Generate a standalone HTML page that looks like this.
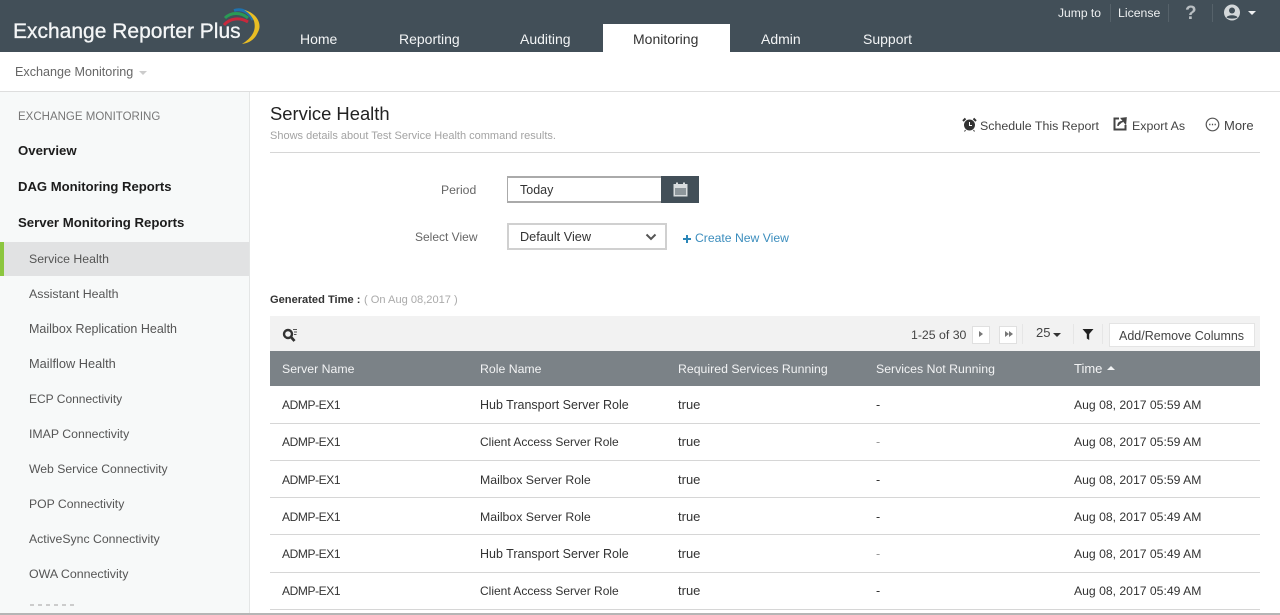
<!DOCTYPE html>
<html><head><meta charset="utf-8"><title>Service Health</title>
<style>
html,body{margin:0;padding:0;width:1280px;height:615px;overflow:hidden;background:#fff;font-family:"Liberation Sans",sans-serif}
.t{position:absolute;white-space:nowrap;line-height:20px;height:20px;font-size:12.5px;color:#333}
.b{position:absolute}
.nav{font-size:14px;color:#f2f4f5}
.side{color:#555;left:29px}
.bold{font-size:13.2px;font-weight:bold;color:#1c1c1c;left:18px}
.th{font-size:12.3px;color:#f2f3f4}
.c1{left:282px;font-size:12px;letter-spacing:-.4px}
.c2{left:480px}
.c3{left:678px;font-size:13px}
.c4{left:876px}
.c5{left:1074px;font-size:12.200px}
.hr{position:absolute;left:270px;width:990px;height:1px;background:#d6d6d6}
</style></head><body>
<div class="b" style="left:0;top:0;width:1280px;height:52px;background:#424f58"></div>
<div class="t" style="left:13px;top:20px;height:24px;line-height:24px;font-size:21px;color:#f4f6f7;-webkit-text-stroke:.3px #f4f6f7">Exchange Reporter Plus</div>
<svg class="b" style="left:220px;top:7px" width="44" height="40" viewBox="0 0 44 40" fill="none">
<path d="M4 18C10 11 20 10 28 15" stroke="#c8283c" stroke-width="3"/>
<path d="M5 11C11 5 21 5 28 11" stroke="#2a9a55" stroke-width="3"/>
<path d="M14 3.500C22 1 29 5 33 13" stroke="#1f72ae" stroke-width="3"/>
<path d="M24 3C35 5 43 16 38 25 35 32 30 36 22 37 30 32 37 25 34 14 32 9 28 5 24 3Z" fill="#e9bd24"/>
</svg>
<div class="t nav" style="left:300px;top:29px">Home</div>
<div class="t nav" style="left:399px;top:29px">Reporting</div>
<div class="t nav" style="left:520px;top:29px">Auditing</div>
<div class="b" style="left:603px;top:24px;width:127px;height:28px;background:#fff"></div>
<div class="t nav" style="left:633px;top:29px;color:#333">Monitoring</div>
<div class="t nav" style="left:761px;top:29px">Admin</div>
<div class="t nav" style="left:863px;top:29px">Support</div>
<div class="t" style="left:1058px;top:3px;font-size:12.100px;color:#eef0f1">Jump to</div>
<div class="b" style="left:1110px;top:4px;width:1px;height:18px;background:#56626a"></div>
<div class="t" style="left:1118px;top:3px;font-size:12.300px;color:#eef0f1">License</div>
<div class="b" style="left:1168px;top:4px;width:1px;height:18px;background:#56626a"></div>
<div class="t" style="left:1185px;top:4px;font-size:19px;font-weight:bold;color:#b9bfc3">?</div>
<div class="b" style="left:1212px;top:4px;width:1px;height:18px;background:#56626a"></div>
<svg class="b" style="left:1223px;top:4px" width="18" height="17" viewBox="0 0 18 17"><circle cx="9" cy="8.500" r="8" fill="#d4d8da"/><circle cx="9" cy="6.500" r="3" fill="#424f58"/><path d="M3.500 13.500C4.500 10.500 13.500 10.500 14.500 13.500 12 15 6 15 3.500 13.500Z" fill="#424f58"/></svg>
<div class="b" style="left:1248px;top:11px;border:4px solid transparent;border-top:4px solid #eef0f1;border-bottom:0"></div>

<div class="t" style="left:15px;top:62px;font-size:12.600px;color:#666">Exchange Monitoring</div>
<div class="b" style="left:139px;top:71px;border:4px solid transparent;border-top:4px solid #ccc;border-bottom:0"></div>
<div class="b" style="left:0;top:91px;width:1280px;height:1px;background:#dedede"></div>

<div class="b" style="left:0;top:92px;width:249px;height:521px;background:#f7f9f9;border-right:1px solid #e4e6e6"></div>
<div class="t" style="left:18px;top:107px;font-size:11.500px;color:#777">EXCHANGE MONITORING</div>
<div class="t bold" style="top:141px">Overview</div>
<div class="t bold" style="top:177px;font-size:13.100px">DAG Monitoring Reports</div>
<div class="t bold" style="top:213px">Server Monitoring Reports</div>
<div class="b" style="left:0;top:242px;width:249px;height:34px;background:#e1e2e3"></div>
<div class="b" style="left:0;top:242px;width:4px;height:34px;background:#8cc63f"></div>
<div class="t side" style="top:249px;font-size:12.300px">Service Health</div>
<div class="t side" style="top:284px;font-size:12.400px">Assistant Health</div>
<div class="t side" style="top:319px;font-size:12.500px">Mailbox Replication Health</div>
<div class="t side" style="top:354px;font-size:12.800px">Mailflow Health</div>
<div class="t side" style="top:389px;font-size:12px">ECP Connectivity</div>
<div class="t side" style="top:424px;font-size:12.300px">IMAP Connectivity</div>
<div class="t side" style="top:459px;font-size:12.200px">Web Service Connectivity</div>
<div class="t side" style="top:494px;font-size:12.200px">POP Connectivity</div>
<div class="t side" style="top:529px;font-size:12.250px">ActiveSync Connectivity</div>
<div class="t side" style="top:564px;font-size:12.400px">OWA Connectivity</div>
<div class="b" style="left:30px;top:604px;width:45px;height:2px;background:repeating-linear-gradient(90deg,#ccc 0 4px,#f7f9f9 4px 8px)"></div>
<div class="b" style="left:0;top:613px;width:1280px;height:2px;background:#b5b5b5"></div>

<div class="t" style="left:270px;top:104px;font-size:18.400px;color:#222">Service Health</div>
<div class="t" style="left:270px;top:126px;font-size:11px;color:#a3a3a3">Shows details about Test Service Health command results.</div>
<div class="hr" style="top:152px"></div>

<svg class="b" style="left:962px;top:117px" width="15" height="15" viewBox="0 0 15 15"><circle cx="7.500" cy="8" r="5.500" fill="#333"/><path d="M7.500 5V8.500H10" stroke="#fff" fill="none"/><path d="M1 4L3.500 1.500M14 4L11.500 1.500" stroke="#333" stroke-width="2"/><path d="M3.500 13L2.500 14.500M11.500 13L12.500 14.500" stroke="#333"/></svg>
<div class="t" style="left:980px;top:116px;font-size:12.400px;color:#444">Schedule This Report</div>
<svg class="b" style="left:1113px;top:117px" width="14" height="14" viewBox="0 0 14 14" fill="none"><path d="M6 1.500H1.500V12.500H12.500V8" stroke="#444" stroke-width="2"/><path d="M5 9C5 6 7 4.500 10 4.500M8.500 1.500L13 1 12.500 6.500Z" stroke="#444" stroke-width="1.500" fill="#444"/></svg>
<div class="t" style="left:1132px;top:116px;font-size:12.400px;color:#444">Export As</div>
<svg class="b" style="left:1205px;top:117px" width="15" height="15" viewBox="0 0 15 15" fill="none"><circle cx="7.500" cy="7.500" r="6.300" stroke="#555" stroke-width="1.200"/><path d="M4.200 7.500H5.400M6.900 7.500H8.100M9.600 7.500H10.800" stroke="#444" stroke-width="1.600"/></svg>
<div class="t" style="left:1224px;top:116px;font-size:13px;color:#444">More</div>

<div class="t" style="left:441px;top:180px;font-size:12.200px;color:#666">Period</div>
<div class="b" style="left:507px;top:176px;width:153px;height:23px;border:1px solid #aaa;border-width:2px 1px"></div>
<div class="t" style="left:520px;top:180px;color:#333">Today</div>
<div class="b" style="left:661px;top:176px;width:38px;height:27px;background:#424f58"></div>
<svg class="b" style="left:673px;top:182px" width="15" height="15" viewBox="0 0 15 15"><rect x="0.500" y="2" width="14" height="12.500" fill="#d8dcde"/><rect x="2" y="6" width="11" height="7" fill="#8d969b"/><rect x="3" y="0.500" width="2" height="3" fill="#d8dcde"/><rect x="10" y="0.500" width="2" height="3" fill="#d8dcde"/></svg>

<div class="t" style="left:415px;top:227px;font-size:12px;color:#666">Select View</div>
<div class="b" style="left:507px;top:223px;width:156px;height:23px;border:2px solid #d0d0d0"></div>
<div class="t" style="left:520px;top:227px;font-size:12.700px;color:#333">Default View</div>
<svg class="b" style="left:645px;top:233px" width="12" height="8" viewBox="0 0 12 8" fill="none"><path d="M1.500 1.500L6 6 10.500 1.500" stroke="#555" stroke-width="2"/></svg>
<svg class="b" style="left:682px;top:234px" width="10" height="10" viewBox="0 0 10 10"><path d="M5 1V9M1 5H9" stroke="#2a86b8" stroke-width="2"/></svg>
<div class="t" style="left:695px;top:228px;font-size:12.200px;color:#3b8dbd">Create New View</div>

<div class="t" style="left:270px;top:290px;font-size:11.100px;font-weight:bold;color:#333">Generated Time :</div>
<div class="t" style="left:364px;top:290px;font-size:11.100px;color:#aaa">( On Aug 08,2017 )</div>

<div class="b" style="left:270px;top:316px;width:990px;height:35px;background:#f2f2f2"></div>
<svg class="b" style="left:282px;top:327px" width="16" height="16" viewBox="0 0 16 16" fill="none"><circle cx="6" cy="7" r="4" stroke="#333" stroke-width="2.400"/><path d="M9 10L12.500 14" stroke="#333" stroke-width="2.800"/><path d="M11 2.500H15M12 5H15M12 7.500H14.500" stroke="#555"/></svg>
<div class="t" style="left:911px;top:325px;font-size:12.300px;color:#444">1-25 of 30</div>
<div class="b" style="left:972px;top:326px;width:16px;height:16px;background:#fff;border:1px solid #e0e0e0"></div>
<div class="b" style="left:979px;top:331px;border:3.500px solid transparent;border-left:4px solid #777;border-right:0"></div>
<div class="b" style="left:999px;top:326px;width:16px;height:16px;background:#fff;border:1px solid #e0e0e0"></div>
<div class="b" style="left:1005px;top:331px;border:3.500px solid transparent;border-left:4px solid #777;border-right:0"></div>
<div class="b" style="left:1009px;top:331px;border:3.500px solid transparent;border-left:4px solid #777;border-right:0"></div>
<div class="b" style="left:1022px;top:324px;width:1px;height:20px;background:#e6e6e6"></div>
<div class="t" style="left:1036px;top:323px;color:#444;font-size:13px">25</div>
<div class="b" style="left:1053px;top:333px;border:4px solid transparent;border-top:4px solid #333;border-bottom:0"></div>
<div class="b" style="left:1073px;top:324px;width:1px;height:20px;background:#e6e6e6"></div>
<svg class="b" style="left:1082px;top:329px" width="12" height="11" viewBox="0 0 12 11"><path d="M0.500 0H11.500L7.200 5V11L4.800 9.500V5Z" fill="#222"/></svg>
<div class="b" style="left:1102px;top:324px;width:1px;height:20px;background:#e6e6e6"></div>
<div class="b" style="left:1109px;top:323px;width:144px;height:22px;background:#fff;border:1px solid #e4e4e4"></div>
<div class="t" style="left:1119px;top:326px;color:#444">Add/Remove Columns</div>

<div class="b" style="left:270px;top:351px;width:990px;height:35px;background:#7b8287"></div>
<div class="t th" style="left:282px;top:359px">Server Name</div>
<div class="t th" style="left:480px;top:359px">Role Name</div>
<div class="t th" style="left:678px;top:359px">Required Services Running</div>
<div class="t th" style="left:876px;top:359px">Services Not Running</div>
<div class="t th" style="left:1074px;top:359px;font-size:13px">Time</div>
<div class="b" style="left:1107px;top:366px;border:4px solid transparent;border-bottom:4px solid #f2f3f4;border-top:0"></div>

<div class="t c1" style="top:395px">ADMP-EX1</div><div class="t c2" style="top:395px">Hub Transport Server Role</div><div class="t c3" style="top:395px">true</div><div class="t c4" style="top:395px">-</div><div class="t c5" style="top:395px">Aug 08, 2017 05:59 AM</div>
<div class="hr" style="top:423px"></div>
<div class="t c1" style="top:432px">ADMP-EX1</div><div class="t c2" style="top:432px;font-size:12px">Client Access Server Role</div><div class="t c3" style="top:432px">true</div><div class="t c4" style="top:432px;color:#999">-</div><div class="t c5" style="top:432px">Aug 08, 2017 05:59 AM</div>
<div class="hr" style="top:460px"></div>
<div class="t c1" style="top:470px">ADMP-EX1</div><div class="t c2" style="top:470px;font-size:12.300px">Mailbox Server Role</div><div class="t c3" style="top:470px">true</div><div class="t c4" style="top:470px">-</div><div class="t c5" style="top:470px">Aug 08, 2017 05:59 AM</div>
<div class="hr" style="top:497px"></div>
<div class="t c1" style="top:507px">ADMP-EX1</div><div class="t c2" style="top:507px;font-size:12.300px">Mailbox Server Role</div><div class="t c3" style="top:507px">true</div><div class="t c4" style="top:507px">-</div><div class="t c5" style="top:507px">Aug 08, 2017 05:49 AM</div>
<div class="hr" style="top:534px"></div>
<div class="t c1" style="top:544px">ADMP-EX1</div><div class="t c2" style="top:544px">Hub Transport Server Role</div><div class="t c3" style="top:544px">true</div><div class="t c4" style="top:544px;color:#999">-</div><div class="t c5" style="top:544px">Aug 08, 2017 05:49 AM</div>
<div class="hr" style="top:572px"></div>
<div class="t c1" style="top:581px">ADMP-EX1</div><div class="t c2" style="top:581px;font-size:12px">Client Access Server Role</div><div class="t c3" style="top:581px">true</div><div class="t c4" style="top:581px">-</div><div class="t c5" style="top:581px">Aug 08, 2017 05:49 AM</div>
<div class="hr" style="top:609px"></div>
</body></html>
